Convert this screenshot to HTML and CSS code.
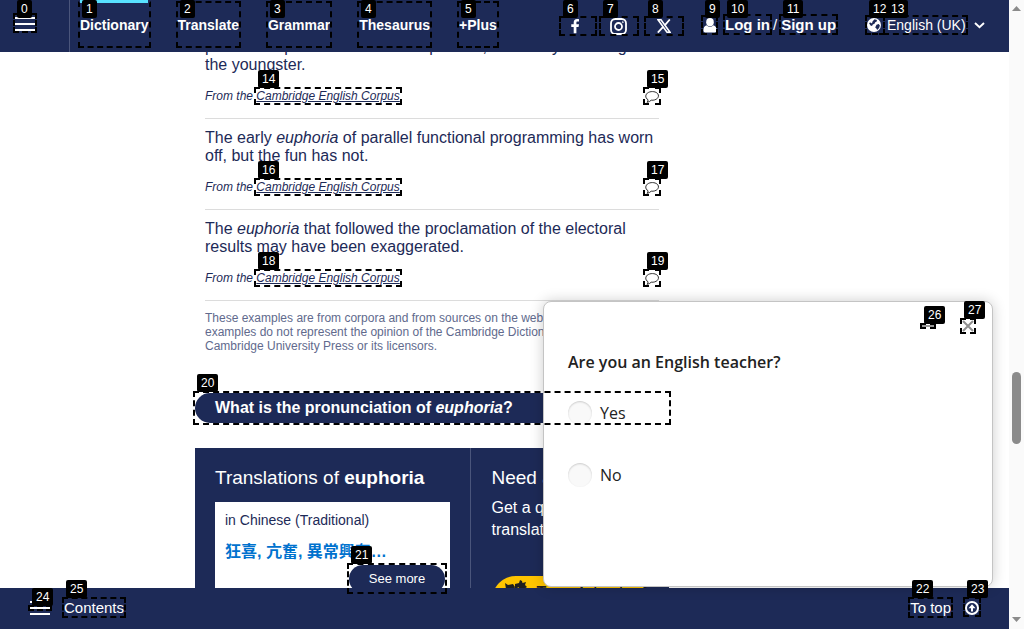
FILE: index.html
```html
<!DOCTYPE html>
<html lang="en">
<head>
<meta charset="utf-8">
<title>euphoria</title>
<link rel="stylesheet" href="styles.css">
</head>
<body>
<div class="page">
  <header class="header">
    <div class="menu"><svg width="20" height="16" viewBox="0 0 20 16"><path d="M0 2h20M0 8h20M0 14h20" stroke="#fff" stroke-width="2"/></svg></div>
    <nav class="nav">
      <a class="active">Dictionary</a><a>Translate</a><a>Grammar</a><a>Thesaurus</a><a>+Plus</a>
    </nav>
    <div class="social">
      <svg width="9" height="16" viewBox="0 0 10 16"><path d="M3 16V9H.3V6H3V4.200C3 1.700 4.300.3 6.700.3c1 0 1.900.1 2.200.1v2.500H7.300C6.200 2.900 6 3.500 6 4.300V6h2.900l-.5 3H6v7z" fill="#fff"/></svg>
      <svg width="17" height="17" viewBox="0 0 17 17" fill="none" stroke="#fff" stroke-width="1.800"><rect x="1" y="1" width="15" height="15" rx="4.300"/><circle cx="8.500" cy="8.500" r="3.500"/><circle cx="12.800" cy="4.200" r=".5" stroke-width="1"/></svg>
      <svg width="14" height="14" viewBox="0 0 14 14" fill="none" stroke="#fff"><path d="M1 .8h3L13 13.200h-3z" stroke-width="1.600"/><path d="M12.800.5L7.700 6.300M5.900 8.100L.8 13.600" stroke-width="1.800"/></svg>
    </div>
    <div class="account">
      <svg width="14" height="15" viewBox="0 0 14 15" fill="#fff"><ellipse cx="7" cy="4.200" rx="3.800" ry="4.100"/><path d="M3.500 7.200Q7 10.300 10.500 7.200Q13.600 8 13.600 12.500Q13.600 14.500 11.700 14.500H2.300Q.4 14.500.4 12.500Q.4 8 3.500 7.200"/></svg>
      <b class="login">Log in</b><span class="slash">/</span><b>Sign up</b>
    </div>
    <div class="language">
      <svg width="14" height="14" viewBox="0 0 14 14"><circle cx="7" cy="7" r="7" fill="#fff"/><path d="M7.500 1.200l2.500.8-.5 1.800-1.300.4-.7 1.600-1.700.6L5 8 3.500 7.500 2 5l1.500-.5L5 5.500 5.500 3.500zM9.500 6.800l2.200-.8 1.200 1.500-.8 2.500-1.900 2-1-1.800-1-.8z" fill="#1d2a57"/></svg>
      <span>English (UK)</span>
      <svg class="chevron" width="11" height="7" viewBox="0 0 11 7"><path d="M1 1l4.500 4.300L10 1" fill="none" stroke="#fff" stroke-width="1.900"/></svg>
    </div>
  </header>

  <main class="main">
    <div class="column">
      <section class="examples">
        <article class="example">
          <p>parents as parts about children parents, but also your son got<br>the youngster.</p>
          <div class="source"><span>From the <u>Cambridge English Corpus</u></span><svg class="bubble" viewBox="0 0 14 12"><path d="M3 8.700C-.3 6.800.3 3 3.300 1.500C7-.3 11.200.7 12.800 2.800C15 6 11.500 9.700 6.200 9.200Q4.500 11 2 11.300Q3.400 10 3 8.700z"/></svg></div>
        </article>
        <article class="example">
          <p>The early <i>euphoria</i> of parallel functional programming has worn off, but the fun has not.</p>
          <div class="source"><span>From the <u>Cambridge English Corpus</u></span><svg class="bubble" viewBox="0 0 14 12"><path d="M3 8.700C-.3 6.800.3 3 3.300 1.500C7-.3 11.200.7 12.800 2.800C15 6 11.500 9.700 6.200 9.200Q4.500 11 2 11.300Q3.400 10 3 8.700z"/></svg></div>
        </article>
        <article class="example">
          <p>The <i>euphoria</i> that followed the proclamation of the electoral results may have been exaggerated.</p>
          <div class="source"><span>From the <u>Cambridge English Corpus</u></span><svg class="bubble" viewBox="0 0 14 12"><path d="M3 8.700C-.3 6.800.3 3 3.300 1.500C7-.3 11.200.7 12.800 2.800C15 6 11.500 9.700 6.200 9.200Q4.500 11 2 11.300Q3.400 10 3 8.700z"/></svg></div>
        </article>
        <p class="disclaimer">These examples are from corpora and from sources on the web. Any opinions in the<br>examples do not represent the opinion of the Cambridge Dictionary editors or of<br>Cambridge University Press or its licensors.</p>
      </section>
      <a class="question">What is the pronunciation of&nbsp;<i>euphoria</i>?</a>
      <section class="panel">
        <div class="translations">
          <h2>Translations of <b>euphoria</b></h2>
          <div class="card">
            <div class="lang">in Chinese (Traditional)</div>
            <div class="word" lang="zh-Hant">狂喜, 亢奮, 異常興奮…</div>
            <a class="more">See more</a>
          </div>
        </div>
        <div class="translator">
          <h2>Need a translator?</h2>
          <p>Get a quick, free translation!</p>
          <a class="tool"><svg width="24" height="22" viewBox="0 0 24 22" fill="#1f1f1f"><path d="M1 3l3 2 5-1 2 3-2 5-4 1-3-4zM11 4l4-1 1-3 2 1 .5 2L22 2l-1 3 2 2-3 2-2 5-5-1 2-6-4 2z"/></svg><b>Translator tool</b></a>
        </div>
      </section>
    </div>
  </main>

  <footer class="footer">
    <svg width="20" height="16" viewBox="0 0 20 16"><path d="M0 2h20M0 8h20M0 14h20" stroke="#fff" stroke-width="2"/></svg>
    <span class="contents">Contents</span>
    <span class="top">To top</span>
    <svg width="14" height="14" viewBox="0 0 14 14" fill="none" stroke="#fff" stroke-width="2"><circle cx="7" cy="7" r="6"/><path d="M7 10.500V5" /><path d="M3.500 7.200L7 3.200 10.500 7.200z" fill="#fff" stroke="none"/></svg>
  </footer>

  <aside class="survey">
    <div class="controls">
      <svg width="12" height="2"><path d="M0 1h12" stroke="#999" stroke-width="2"/></svg>
      <svg width="12" height="12"><path d="M1 1l10 10M11 1L1 11" stroke="#909090" stroke-width="2"/></svg>
    </div>
    <h3>Are you an English teacher?</h3>
    <label class="option"><span class="radio"></span>Yes</label>
    <label class="option"><span class="radio"></span>No</label>
  </aside>
</div>
<div class="scrollbar">
  <svg width="9" height="5"><path d="M0 5L4.500 0 9 5z" fill="#8b8b8b"/></svg>
  <div class="thumb"></div>
  <svg width="9" height="5"><path d="M0 0h9L4.500 5z" fill="#8b8b8b"/></svg>
</div>
<div class="marks" id="marks"></div>
<script src="marks.js"></script>
</body>
</html>
```
FILE: styles.css
```css
* { box-sizing: border-box; }
body { margin: 0; width: 1024px; height: 629px; overflow: hidden; display: flex; position: relative; background: #fff; color: #1d2a57; font-family: "Liberation Sans", Arial, sans-serif; }
p, h2, h3 { margin: 0; font-weight: 400; }
svg { display: block; flex: none; }
.page { width: 1009px; height: 629px; display: flex; flex-direction: column; position: relative; overflow: hidden; }

.header { height: 52px; flex: none; display: flex; align-items: center; background: #1d2a57; color: #fff; font-size: 14px; white-space: nowrap; }
.menu { width: 70px; height: 52px; padding: 16px 0 0 15px; border-right: 1px solid #4a557b; }
.nav { width: 491px; height: 52px; padding-left: 10px; display: flex; gap: 29px; font-weight: 700; }
.nav a { height: 52px; line-height: 44px; border-top: 3px solid transparent; }
.nav .active { border-color: #58e2ff; }
.social { width: 142px; padding-left: 10px; display: flex; align-items: center; gap: 30px; }
.account { width: 164px; display: flex; align-items: center; font-size: 15px; line-height: 18px; padding-bottom: 2px; }
.login { margin-left: 8px; }
.slash { margin: 0 4px 0 3px; }
.language { display: flex; align-items: center; gap: 6px; padding-bottom: 2px; line-height: 18px; }
.chevron { margin-left: 2px; }

.main { flex: 1; min-height: 0; overflow: hidden; padding-left: 195px; }
.column { width: 474px; margin-top: -25px; }
.examples { padding: 0 10px; }
.example { border-top: 1px solid #dcdcdc; padding: 10px 0 13px; font-size: 16px; line-height: 18px; }
.source { margin-top: 13px; display: flex; justify-content: space-between; font-size: 12px; font-style: italic; }
.bubble { width: 14px; height: 12px; margin-top: 4px; fill: none; stroke: #333; stroke-width: 1; }
.disclaimer { border-top: 1px solid #dcdcdc; padding-top: 10px; font-size: 12px; line-height: 14px; color: #616a8d; white-space: nowrap; }
.question { display: flex; align-items: center; margin-top: 40px; height: 30px; padding-left: 20px; border-radius: 15px; background: #1d2a57; color: #fff; font-weight: 700; font-size: 16px; }
.panel { margin-top: 25px; height: 220px; display: flex; background: #1d2a57; color: #fff; }
.translations { width: 276px; padding: 18px 20px 0; border-right: 1px solid #4a557b; }
h2 { font-size: 19px; line-height: 24px; white-space: nowrap; }
.card { width: 235px; height: 120px; margin-top: 12px; padding: 9px 5px 0 10px; background: #fff; display: flex; flex-direction: column; }
.lang { color: #1d2a57; font-size: 14px; line-height: 18px; }
.word { margin-top: 11px; color: #0072ce; font: 700 16px/24px "Liberation Sans", "Noto Sans CJK TC", sans-serif; white-space: nowrap; }
.more { align-self: flex-end; margin-top: 1px; width: 96px; height: 28px; border-radius: 14px; background: #1d2a57; color: #fff; font-size: 13px; line-height: 28px; text-align: center; }
.translator { width: 198px; padding: 18px 20px 0 20.500px; }
.translator p { margin-top: 7px; font-size: 16px; line-height: 22px; }
.tool { display: flex; width: 155px; height: 48px; margin: 35px 0 0; padding: 4px 0 0 12px; gap: 9px; border-radius: 24px; background: #fec400; color: #1f1f1f; font-size: 16px; line-height: 26px; white-space: nowrap; }

.footer { height: 41px; flex: none; display: flex; align-items: center; padding: 0 30px 2px; background: #1d2a57; color: #fff; font-size: 15px; }
.contents { margin-left: 14px; }
.top { margin-left: auto; margin-right: 14px; }

.survey { position: absolute; left: 543px; top: 301px; width: 450px; height: 286px; padding: 0 16px 0 24px; background: #fff; border: 1px solid #c4c4c4; border-radius: 8px; box-shadow: 0 0 14px rgba(0,0,0,.2); color: #222; font: 16px "Open Sans", sans-serif; }
.controls { height: 48px; display: flex; justify-content: flex-end; align-items: center; gap: 28px; margin-right: 2px; }
.survey h3 { font-size: 16px; font-weight: 600; line-height: 24px; }
.option { display: flex; align-items: center; gap: 8px; height: 24px; margin-top: 27px; }
.option + .option { margin-top: 38px; }
.radio { width: 24px; height: 24px; border-radius: 50%; background: #f9f9f9; box-shadow: inset 0 1px 2px rgba(0,0,0,.18); }

.scrollbar { width: 15px; height: 629px; padding: 6px 3px 7px; background: #fafafa; display: flex; flex-direction: column; justify-content: space-between; }
.thumb { width: 9px; height: 72px; margin-top: 188px; border-radius: 5px; background: #8b8b8b; }

.mark { position: absolute; border: 2px dashed #000; }
.mark.under-bar { border-top-color: transparent; }
.tag { position: absolute; height: 18px; padding: 0 4px; border-radius: 2px; background: #000; color: #fff; font-size: 12px; line-height: 18px; }
```
FILE: marks.js
```javascript
// Each entry: left, top, right, bottom of an outlined control, in index order.
const boxes = [
  [13,13,37,33],[78,1,151,48],[176,1,241,48],[266,1,332,48],[357,1,432,48],[457,1,499,48],
  [559,16,597,36],[599,16,639,36],[644,16,684,36],[701,15,718,35],[723,14,772,35],[779,14,838,35],
  [865,15,885,35],[883,15,968,35],[254,87,402,105],[643,87,661,105],[254,178,402,196],[643,178,661,196],
  [254,269,402,287],[643,269,661,287],[193,391,671,425],[347,563,447,594],[908,597,953,618],[963,597,981,617],
  [28,605,52,611],[62,597,126,618],[920,323,936,329],[960,318,976,334]
];
const root = document.getElementById('marks');
boxes.forEach(([l, t, r, b], i) => {
  const box = document.createElement('div');
  box.className = i === 1 ? 'mark under-bar' : 'mark';
  box.style.cssText = `left:${l}px;top:${t}px;width:${r - l}px;height:${b - t}px`;
  root.append(box);
});
boxes.forEach(([l, t], i) => {
  const tag = document.createElement('div');
  tag.className = 'tag';
  tag.textContent = i;
  tag.style.cssText = `left:${l + 4}px;top:${Math.max(0, t - 17)}px`;
  root.append(tag);
});
```
